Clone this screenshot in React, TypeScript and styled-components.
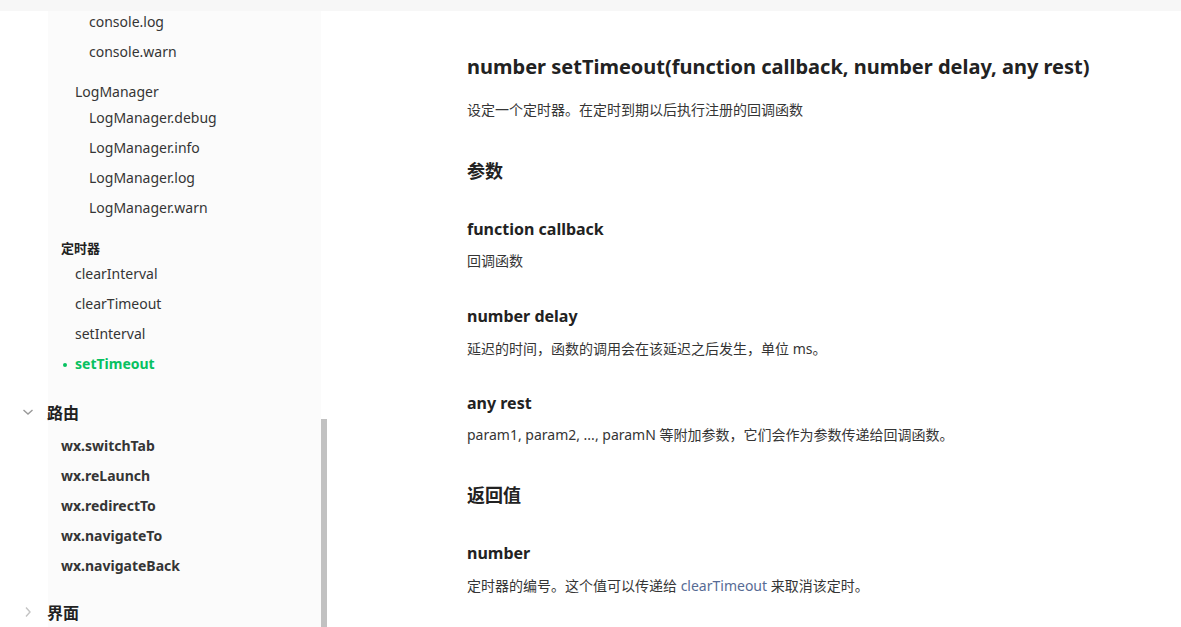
import styled, { createGlobalStyle } from 'styled-components';

const GlobalStyle = createGlobalStyle`
  html, body {
    margin: 0;
    padding: 0;
    background: #fff;
  }
  body {
    font-family: "Noto Sans", "Noto Sans CJK SC", sans-serif;
    color: #353535;
  }
`;

const Page = styled.div`
  width: 1181px;
  height: 627px;
  overflow: hidden;
  display: flex;
  flex-direction: column;
`;

const TopBar = styled.div`
  height: 11px;
  flex: none;
  background: #f7f7f7;
`;

const Body = styled.div`
  flex: 1;
  display: flex;
  min-height: 0;
`;

const Sidebar = styled.nav`
  width: 321px;
  flex: none;
  display: flex;
  flex-direction: column;
  background: linear-gradient(to right, #fff 0, #fff 48px, #fbfbfb 48px);
`;

const ScrollTrack = styled.div`
  width: 6px;
  flex: none;
  display: flex;
  flex-direction: column;
  background: #fff;
`;

const ScrollThumb = styled.div`
  margin-top: 408px;
  flex: 1;
  background: #c1c1c1;
`;

const Item = styled.div<{ indent: number; gap?: number; active?: boolean; bold?: boolean }>`
  position: relative;
  height: 30px;
  line-height: 30px;
  padding-left: ${p => p.indent}px;
  margin-top: ${p => p.gap ?? 0}px;
  font-size: 14px;
  font-weight: ${p => (p.active || p.bold ? 700 : 400)};
  color: ${p => (p.active ? '#07c160' : '#353535')};
  white-space: nowrap;

  ${p => p.active && `
    &::before {
      content: '';
      position: absolute;
      left: ${p.indent - 12}px;
      top: 14px;
      width: 4px;
      height: 4px;
      border-radius: 50%;
      background: #07c160;
    }
  `}
`;

const GroupTitle = styled.div<{ gap: number }>`
  padding-left: 61px;
  margin-top: ${p => p.gap}px;
  height: 22px;
  line-height: 22px;
  font-size: 13px;
  font-weight: 700;
  color: #222;
`;

const Section = styled.div<{ gap: number }>`
  display: flex;
  align-items: center;
  height: 30px;
  margin-top: ${p => p.gap}px;
  font-size: 16px;
  font-weight: 700;
  color: #222;
`;

const Chevron = styled.span<{ open?: boolean }>`
  width: 47px;
  display: flex;
  justify-content: center;
  padding-left: 8px;
  box-sizing: border-box;
  color: ${p => (p.open ? '#999' : '#c4c4c4')};
`;

const Main = styled.main`
  flex: 1;
  padding: 42px 0 0 140px;
  color: #353535;
`;

const Title = styled.h1`
  margin: 0;
  font-size: 20px;
  line-height: 28px;
  font-weight: 700;
  color: #222;
`;

const Text = styled.p<{ gap: number }>`
  margin: ${p => p.gap}px 0 0;
  font-size: 14px;
  line-height: 20px;
`;

const H2 = styled.h2<{ gap: number }>`
  margin: ${p => p.gap}px 0 0;
  font-size: 18px;
  line-height: 26px;
  font-weight: 700;
  color: #222;
`;

const H3 = styled.h3<{ gap: number }>`
  margin: ${p => p.gap}px 0 0;
  font-size: 16px;
  line-height: 22px;
  font-weight: 700;
  color: #222;
`;

const Link = styled.a`
  color: #576b95;
  text-decoration: none;
`;

const Arrow = ({ open }: { open?: boolean }) => (
  <svg width="12" height="12" viewBox="0 0 12 12" fill="none" stroke="currentColor" strokeWidth="1.4">
    {open ? <path d="M1.5 4 L6 8 L10.5 4" /> : <path d="M4 1.5 L8 6 L4 10.5" />}
  </svg>
);

const consoleItems = ['console.log', 'console.warn'];
const logItems = ['LogManager.debug', 'LogManager.info', 'LogManager.log', 'LogManager.warn'];
const timerItems = ['clearInterval', 'clearTimeout', 'setInterval', 'setTimeout'];
const routeItems = ['wx.switchTab', 'wx.reLaunch', 'wx.redirectTo', 'wx.navigateTo', 'wx.navigateBack'];

export default function App() {
  return (
    <Page>
      <GlobalStyle />
      <TopBar />
      <Body>
        <Sidebar>
          {consoleItems.map((t, i) => (
            <Item key={t} indent={89} gap={i === 0 ? -4 : 0}>{t}</Item>
          ))}
          <Item indent={75} gap={10}>LogManager</Item>
          {logItems.map((t, i) => (
            <Item key={t} indent={89} gap={i === 0 ? -4 : 0}>{t}</Item>
          ))}
          <GroupTitle gap={14}>定时器</GroupTitle>
          {timerItems.map(t => (
            <Item key={t} indent={75} active={t === 'setTimeout'}>{t}</Item>
          ))}
          <Section gap={18}>
            <Chevron open><Arrow open /></Chevron>
            路由
          </Section>
          {routeItems.map((t, i) => (
            <Item key={t} indent={61} bold gap={i === 0 ? 4 : 0}>{t}</Item>
          ))}
          <Section gap={16}>
            <Chevron><Arrow /></Chevron>
            界面
          </Section>
        </Sidebar>
        <ScrollTrack>
          <ScrollThumb />
        </ScrollTrack>
        <Main>
          <Title>number setTimeout(function callback, number delay, any rest)</Title>
          <Text gap={19}>设定一个定时器。在定时到期以后执行注册的回调函数</Text>
          <H2 gap={38}>参数</H2>
          <H3 gap={34}>function callback</H3>
          <Text gap={11}>回调函数</Text>
          <H3 gap={34}>number delay</H3>
          <Text gap={12}>延迟的时间，函数的调用会在该延迟之后发生，单位 ms。</Text>
          <H3 gap={33}>any rest</H3>
          <Text gap={11}>param1, param2, ..., paramN 等附加参数，它们会作为参数传递给回调函数。</Text>
          <H2 gap={37}>返回值</H2>
          <H3 gap={34}>number</H3>
          <Text gap={12}>
            定时器的编号。这个值可以传递给 <Link>clearTimeout</Link> 来取消该定时。
          </Text>
        </Main>
      </Body>
    </Page>
  );
}
